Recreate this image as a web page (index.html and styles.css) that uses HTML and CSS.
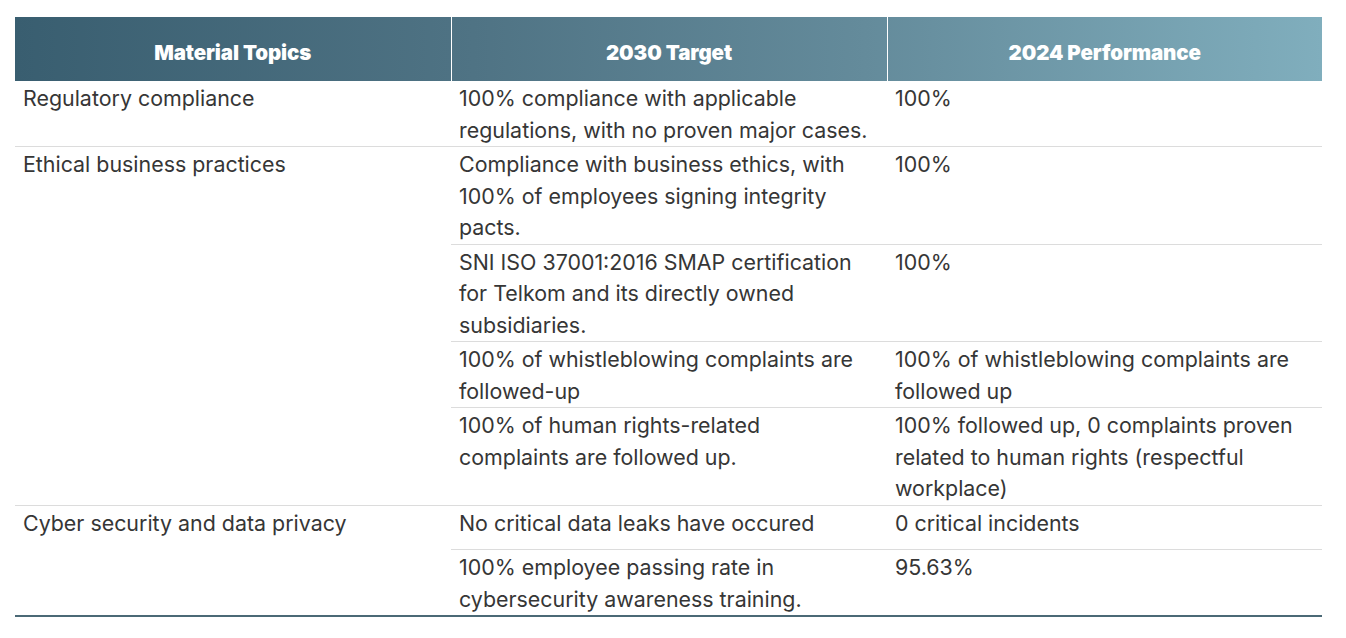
FILE: index.html
```html
<!DOCTYPE html>
<html lang="en">
<head>
<meta charset="utf-8">
<title>Material Topics</title>
<link rel="stylesheet" href="styles.css">
</head>
<body>
<table class="topics">
  <colgroup>
    <col class="c1"><col class="c2"><col class="c3">
  </colgroup>
  <thead>
    <tr>
      <th class="h1">Material Topics</th>
      <th class="h2">2030 Target</th>
      <th class="h3">2024 Performance</th>
    </tr>
  </thead>
  <tbody>
    <tr>
      <td>Regulatory compliance</td>
      <td class="target">100% compliance with applicable regulations, with no proven major cases.</td>
      <td>100%</td>
    </tr>
    <tr>
      <td rowspan="4">Ethical business practices</td>
      <td class="target">Compliance with business ethics, with 100% of employees signing integrity pacts.</td>
      <td>100%</td>
    </tr>
    <tr>
      <td class="target">SNI ISO 37001:2016 SMAP certification for Telkom and its directly owned subsidiaries.</td>
      <td>100%</td>
    </tr>
    <tr>
      <td class="target">100% of whistleblowing complaints are followed-up</td>
      <td>100% of whistleblowing complaints are followed up</td>
    </tr>
    <tr>
      <td class="target">100% of human rights-related complaints are followed up.</td>
      <td>100% followed up, 0 complaints proven related to human rights (respectful workplace)</td>
    </tr>
    <tr class="tall">
      <td rowspan="2">Cyber security and data privacy</td>
      <td class="target">No critical data leaks have occured</td>
      <td>0 critical incidents</td>
    </tr>
    <tr class="last">
      <td class="target">100% employee passing rate in cybersecurity awareness training.</td>
      <td>95.63%</td>
    </tr>
  </tbody>
</table>
</body>
</html>
```

FILE: styles.css
```css
html, body {
  margin: 0;
  padding: 0;
  background: #ffffff;
}

body {
  padding: 17px 0 0 15px;
  font-family: Inter, "Noto Sans", "Liberation Sans", sans-serif;
}

.topics {
  width: 1307px;
  border-collapse: collapse;
  table-layout: fixed;
  border-bottom: 2px solid #4b6976;
}

.c1 { width: 436px; }
.c2 { width: 436px; }
.c3 { width: 435px; }

.topics th {
  height: 58px;
  padding: 6px 0 0;
  color: #ffffff;
  font-size: 20.5px;
  font-weight: 900;
  letter-spacing: -0.1px;
  text-align: center;
  vertical-align: middle;
  background-image: linear-gradient(90deg, #395e70 0%, #4f7384 35%, #648b9b 65%, #80aebd 100%);
  background-size: 300% 100%;
  background-repeat: no-repeat;
}

.topics th.h1 { background-position: 0% 0; border-right: 1px solid #ffffff; }
.topics th.h2 { background-position: 50% 0; border-right: 1px solid #ffffff; }
.topics th.h3 { background-position: 100% 0; }

.topics td {
  padding: 2px 8px 0;
  vertical-align: top;
  color: #363636;
  font-size: 21.4px;
  line-height: 31.5px;
  border-bottom: 1px solid #dcdcdc;
}

.topics td.target {
  padding-right: 14px;
}

.topics tr.tall td {
  padding-bottom: 10px;
}

.topics tr.last td {
  border-bottom: none;
}
```
